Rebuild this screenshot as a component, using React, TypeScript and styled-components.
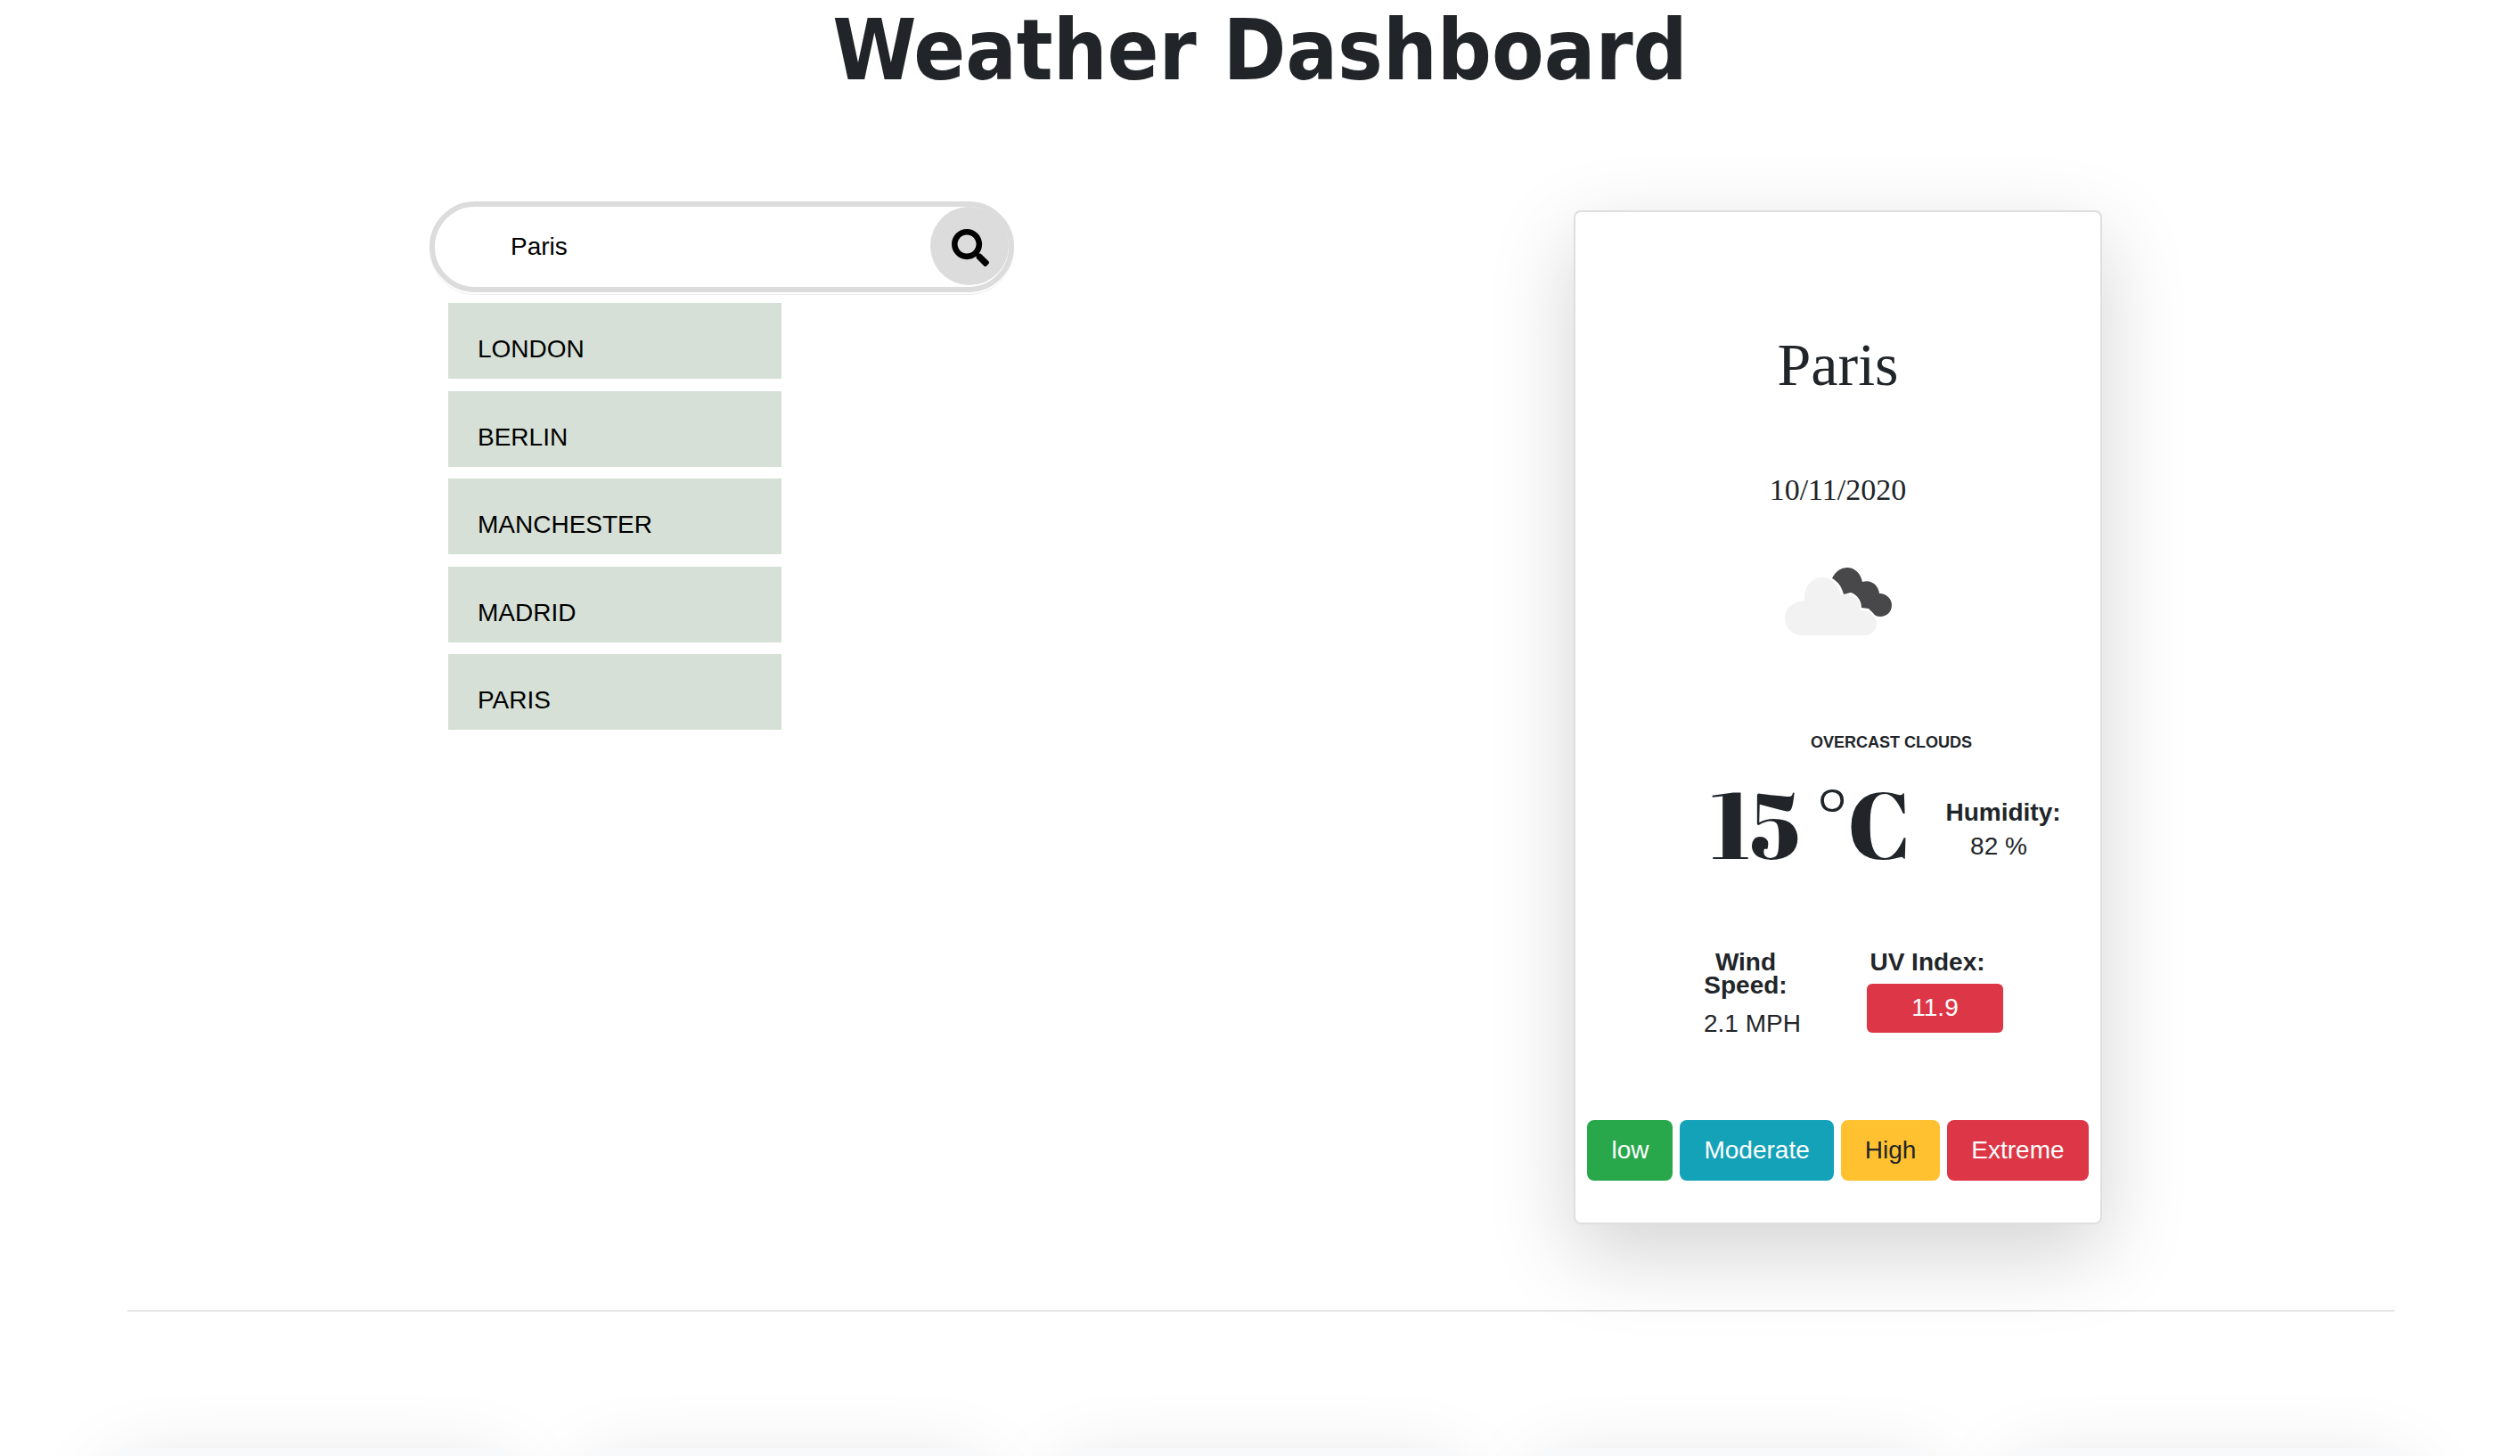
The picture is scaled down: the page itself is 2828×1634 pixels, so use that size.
import React from "react";
import styled, { createGlobalStyle } from "styled-components";
import { FaSearch } from "react-icons/fa";

const GlobalStyle = createGlobalStyle`
  *, *::before, *::after { box-sizing: border-box; }
  body {
    margin: 0;
    background: #fff;
    color: #212529;
    font-family: "Liberation Sans", Arial, sans-serif;
    font-size: 28px;
    line-height: 38px;
  }
  ::-webkit-scrollbar { display: none; }
`;

const Title = styled.h1`
  margin: 0;
  text-align: center;
  font-family: Tahoma, "DejaVu Sans Condensed", sans-serif;
  font-size: 95px;
  font-weight: 700;
  line-height: 112px;
`;

const Main = styled.main`
  display: flex;
  justify-content: space-between;
  align-items: flex-start;
  padding: 114px 469px 0 482px;
`;

const Finder = styled.section`
  width: 656px;
`;

const SearchForm = styled.form`
  display: flex;
  align-items: flex-start;
  height: 102px;
  border: 6px solid #dcdcdc;
  border-radius: 51px;
  background: #fff;
  box-shadow: 0 2px 0 #fff, 0 3px 0 #ededed;
`;

const SearchInput = styled.input`
  flex: 1;
  min-width: 0;
  height: 90px;
  padding: 0 0 0 85px;
  border: 0;
  outline: 0;
  background: transparent;
  color: #000;
  font: inherit;
`;

const SearchButton = styled.button`
  display: flex;
  align-items: center;
  justify-content: center;
  width: 88px;
  height: 88px;
  padding: 4px 0 0 2px;
  border: 0;
  border-radius: 50%;
  background: #dcdcdc;
  color: #000;
  font-size: 42px;
`;

const CityList = styled.ul`
  display: flex;
  flex-direction: column;
  justify-content: space-between;
  height: 479px;
  margin: 12px 0 0 21px;
  padding: 0;
  list-style: none;
`;

const CityButton = styled.button`
  display: block;
  width: 374px;
  padding: 31px 33px 12px;
  border: 0;
  background: #d6e0d7;
  color: #000;
  font: inherit;
  line-height: 42px;
  text-align: left;
  text-transform: uppercase;
`;

const WeatherCard = styled.article`
  width: 593px;
  margin-top: 10px;
  padding: 131px 12px 47px;
  border: 2px solid #dfdfdf;
  border-radius: 8px;
  background: #fff;
  box-shadow: 0 32px 96px rgba(0, 0, 0, 0.175);
  text-align: center;
`;

const CityName = styled.h2`
  margin: 0;
  font-family: "Liberation Serif", "Times New Roman", serif;
  font-size: 68px;
  font-weight: 400;
  line-height: 80px;
`;

const DateText = styled.p`
  margin: 81px 0 67px;
  font-family: "Liberation Serif", "Times New Roman", serif;
  font-size: 34px;
  line-height: 40px;
`;

const CloudIcon = styled.svg`
  display: block;
  width: 120px;
  height: 76px;
  margin: 0 auto;
`;

const Description = styled.p`
  margin: 109px 0 0;
  padding-left: 120px;
  font-size: 18px;
  font-weight: 700;
  line-height: 22px;
  text-transform: uppercase;
`;

const Details = styled.div`
  margin-left: 132px;
`;

const TemperatureRow = styled.div`
  display: flex;
  align-items: flex-start;
  justify-content: space-between;
  margin-top: 40px;
  padding: 0 32px 0 8px;
`;

const Temperature = styled.strong`
  font-family: "Abril Fatface", "Liberation Serif", serif;
  font-size: 104px;
  font-weight: 400;
  line-height: 80px;
  white-space: nowrap;
`;

const Humidity = styled.div`
  padding-top: 9px;
`;

const MetricLabel = styled.div<{ $width: number; $tight?: boolean }>`
  width: ${(p) => p.$width}px;
  font-weight: 700;
  line-height: ${(p) => (p.$tight ? 26 : 38)}px;
`;

const HumidityValue = styled.div`
  padding-right: 10px;
`;

const MetricsRow = styled.div`
  display: flex;
  align-items: flex-start;
  margin-top: 98px;
`;

const Metric = styled.div<{ $width: number }>`
  display: flex;
  flex-direction: column;
  align-items: flex-start;
  gap: 11px;
  width: ${(p) => p.$width}px;
`;

const UvBadge = styled.span`
  width: 153px;
  padding: 8px 0 9px;
  border-radius: 6px;
  background: #dd3646;
  color: #fff;
`;

const Legend = styled.div`
  display: flex;
  justify-content: center;
  gap: 8px;
  margin-top: 89px;
`;

const LegendButton = styled.button<{ $bg: string; $dark?: boolean }>`
  padding: 15px 27px;
  border: 0;
  border-radius: 8px;
  background: ${(p) => p.$bg};
  color: ${(p) => (p.$dark ? "#212529" : "#fff")};
  font: inherit;
`;

const Divider = styled.hr`
  height: 2px;
  margin: 96px 141px 0 143px;
  border: 0;
  background: rgba(0, 0, 0, 0.1);
`;

const Forecast = styled.section`
  display: grid;
  grid-template-columns: repeat(5, 1fr);
  gap: 100px;
  margin-top: 153px;
  padding: 0 134px 96px;
`;

const ForecastCard = styled.article`
  height: 400px;
  border-radius: 8px;
  background: #f8f9fb;
  box-shadow: 0 32px 96px rgba(0, 0, 0, 0.175);
`;

const cities = ["London", "Berlin", "Manchester", "Madrid", "Paris"];

const levels = [
  { name: "low", bg: "#28a74b" },
  { name: "Moderate", bg: "#13a2b8" },
  { name: "High", bg: "#ffc12f", dark: true },
  { name: "Extreme", bg: "#dd3646" },
];

const days = [1, 2, 3, 4, 5];

export default function App() {
  return (
    <>
      <GlobalStyle />
      <Title>Weather Dashboard</Title>
      <Main>
        <Finder>
          <SearchForm onSubmit={(e) => e.preventDefault()}>
            <SearchInput type="text" aria-label="City" defaultValue="Paris" />
            <SearchButton type="submit" aria-label="Search">
              <FaSearch />
            </SearchButton>
          </SearchForm>
          <CityList>
            {cities.map((city) => (
              <li key={city}>
                <CityButton type="button">{city}</CityButton>
              </li>
            ))}
          </CityList>
        </Finder>
        <WeatherCard>
          <CityName>Paris</CityName>
          <DateText>10/11/2020</DateText>
          <CloudIcon viewBox="0 0 120 76" aria-hidden="true">
            <path
              fill="#48484a"
              d="M53 12C57 4 63 0 70 0c8 0 15 6 17 16 9-3 18 3 19 13 8 0 14 6 14 13 0 8-6 13-13 13-3 0-6-1-8-4l-5-5-8-1c0-8-5-15-12-17l-8 2c-2-8-6-14-13-18z"
            />
            <path
              fill="#f2f2f2"
              d="M20 76C9 76 0 68 0 57s9-19 22-20C21 22 29 11 42 11c10 0 18 7 21 20 11-4 22 3 22 17 9-1 18 6 18 15 0 7-6 13-14 13z"
            />
          </CloudIcon>
          <Description>overcast clouds</Description>
          <Details>
            <TemperatureRow>
              <Temperature>15 °C</Temperature>
              <Humidity>
                <MetricLabel $width={130}>Humidity:</MetricLabel>
                <HumidityValue>82 %</HumidityValue>
              </Humidity>
            </TemperatureRow>
            <MetricsRow>
              <Metric $width={183}>
                <MetricLabel $width={94} $tight>
                  Wind Speed:
                </MetricLabel>
                <span>2.1 MPH</span>
              </Metric>
              <Metric $width={153}>
                <MetricLabel $width={136} $tight>
                  UV Index:
                </MetricLabel>
                <UvBadge>11.9</UvBadge>
              </Metric>
            </MetricsRow>
          </Details>
          <Legend>
            {levels.map((level) => (
              <LegendButton key={level.name} type="button" $bg={level.bg} $dark={level.dark}>
                {level.name}
              </LegendButton>
            ))}
          </Legend>
        </WeatherCard>
      </Main>
      <Divider />
      <Forecast>
        {days.map((day) => (
          <ForecastCard key={day} />
        ))}
      </Forecast>
    </>
  );
}
